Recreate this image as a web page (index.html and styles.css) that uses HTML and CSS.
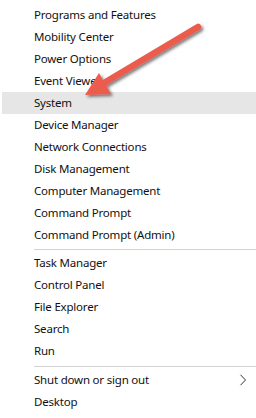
FILE: index.html
```html
<!DOCTYPE html>
<html lang="en">
<head>
    <meta charset="UTF-8">
    <meta name="viewport" content="width=device-width, initial-scale=1.0">
    <title>Quick Link Menu</title>
    <link rel="stylesheet" href="styles.css">
</head>
<body>
    <div class="menu">
        <div class="group">
            <div class="item">Programs and Features</div>
            <div class="item">Mobility Center</div>
            <div class="item">Power Options</div>
            <div class="item">Event Viewer</div>
            <div class="item active">System</div>
            <div class="item">Device Manager</div>
            <div class="item">Network Connections</div>
            <div class="item">Disk Management</div>
            <div class="item">Computer Management</div>
            <div class="item">Command Prompt</div>
            <div class="item">Command Prompt (Admin)</div>
        </div>
        <div class="separator"></div>
        <div class="group">
            <div class="item">Task Manager</div>
            <div class="item">Control Panel</div>
            <div class="item">File Explorer</div>
            <div class="item">Search</div>
            <div class="item">Run</div>
        </div>
        <div class="separator second"></div>
        <div class="group">
            <div class="item submenu">
                <span>Shut down or sign out</span>
                <svg class="chevron" width="8" height="12" viewBox="0 0 8 12">
                    <path d="M1.5 0.8 L6.5 6 L1.5 11.2" fill="none" stroke="#333" stroke-width="1"/>
                </svg>
            </div>
            <div class="item">Desktop</div>
        </div>
    </div>

    <!-- annotation arrow drawn over the menu -->
    <svg class="arrow" width="256" height="120" viewBox="0 0 256 120">
        <defs>
            <filter id="shadow" x="-20%" y="-20%" width="140%" height="140%">
                <feDropShadow dx="2" dy="2" stdDeviation="1.8" flood-color="#000" flood-opacity="0.5"/>
            </filter>
        </defs>
        <g filter="url(#shadow)" fill="#ec5b4e">
            <line x1="198" y1="27" x2="104" y2="83" stroke="#ec5b4e" stroke-width="6.5" stroke-linecap="round"/>
            <polygon points="85,95 99,73 111,94"/>
        </g>
    </svg>
</body>
</html>
```

FILE: styles.css
```css
body {
    margin: 0;
    background: #fff;
    font-family: "Noto Sans", "Open Sans", sans-serif;
    font-size: 11.5px;
    letter-spacing: -0.2px;
    color: #111;
}
.menu {
    width: 256px;
    padding-top: 4px;
}
.item {
    height: 22px;
    line-height: 22px;
    margin-left: 2px;
    padding-left: 32px;
    white-space: nowrap;
}
.item.active {
    background: #e6e6e6;
}
.submenu {
    display: flex;
    align-items: center;
    justify-content: space-between;
    padding-right: 9px;
}
.chevron {
    display: block;
}
.separator {
    height: 1px;
    background: #d2d2d2;
    margin: 3px 0 2px 34px;
}
.separator.second {
    margin-top: 4px;
}
.arrow {
    position: absolute;
    left: 0;
    top: 0;
    pointer-events: none;
}
```
